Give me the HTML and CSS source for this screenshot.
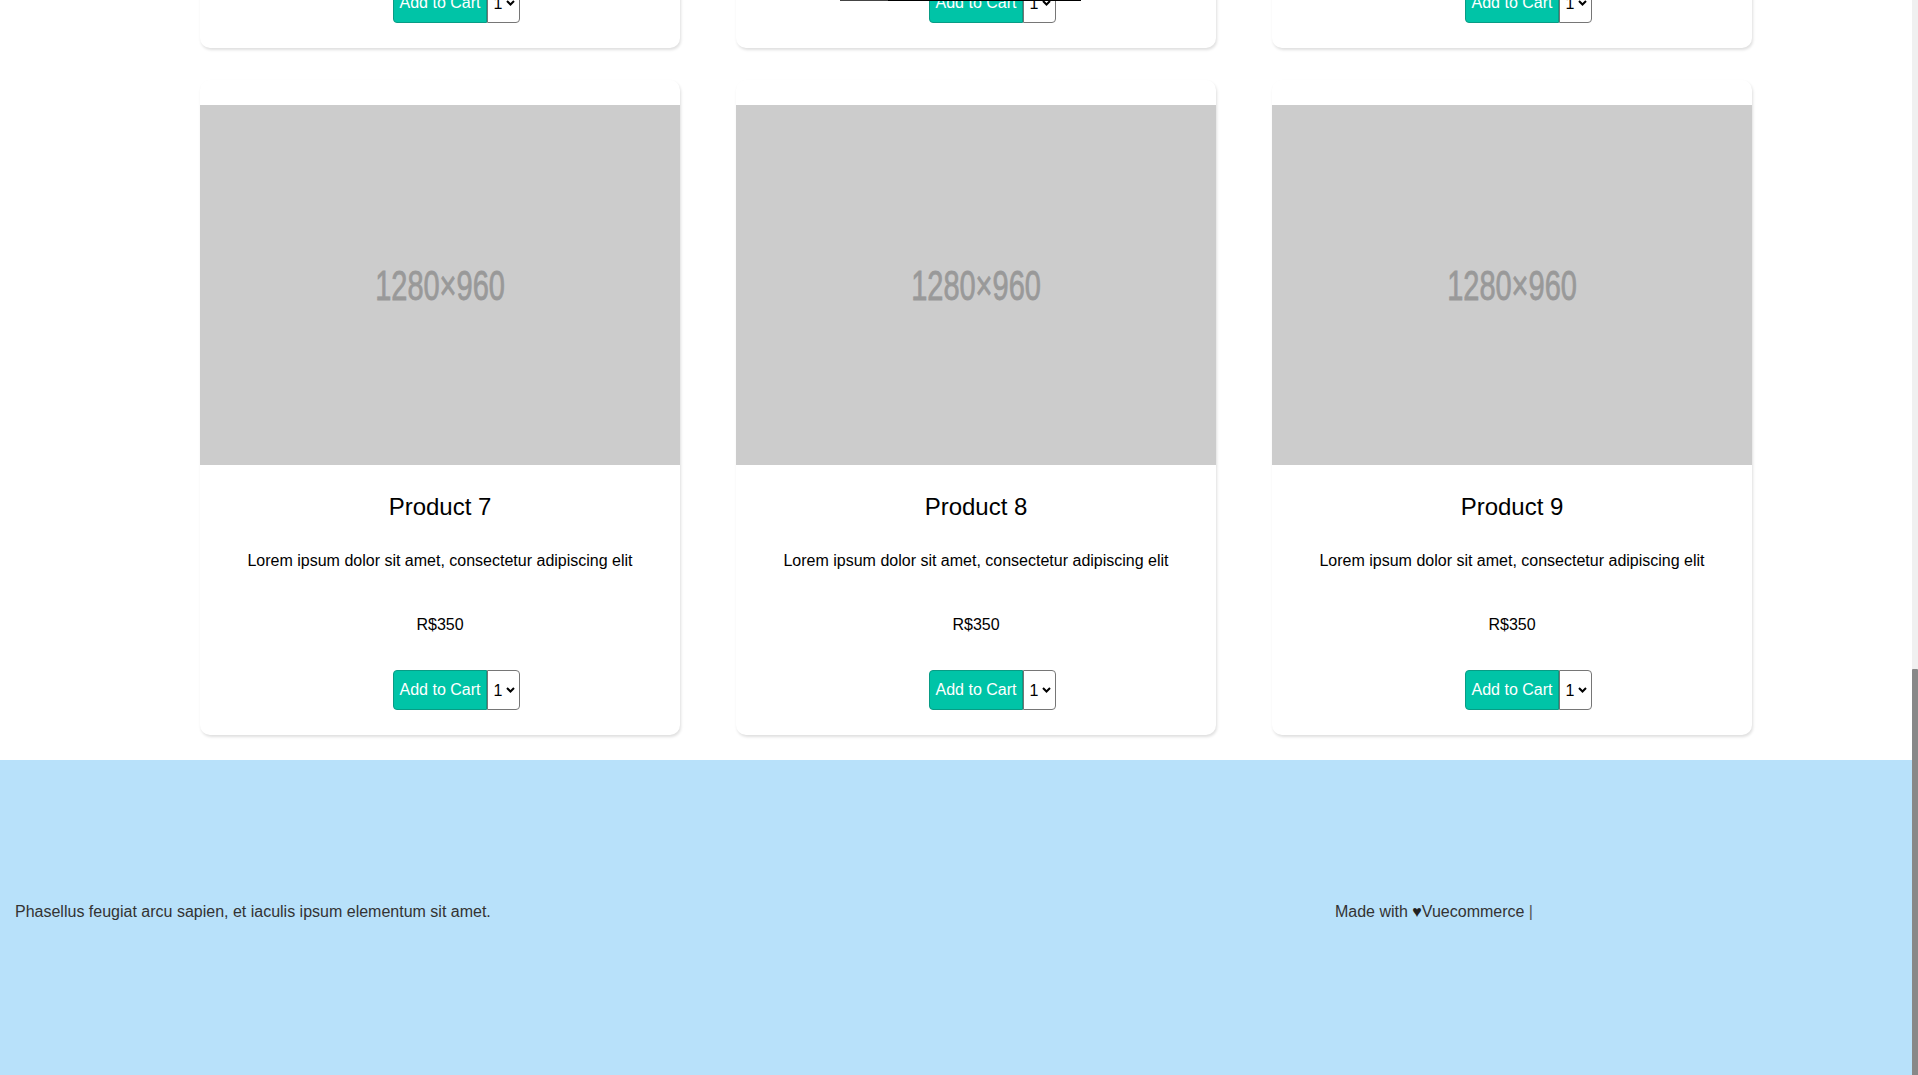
FILE: index.html
```html
<!DOCTYPE html>
<html lang="en">
<head>
<meta charset="utf-8">
<title>Vuecommerce</title>
<link rel="stylesheet" href="styles.css">
</head>
<body>
<div class="scroller">
  <div class="page">
    <header class="header">
      <nav class="navbar">
        <span class="brand">Vuecommerce</span>
        <span class="nav-links"><a href="#">Home</a><a href="#">Cart</a></span>
      </nav>
      <section class="hero">
        <h1 class="hero-title">Vuecommerce</h1>
        <p class="hero-sub">Phasellus feugiat arcu sapien, et iaculis ipsum elementum sit amet.</p>
      </section>
    </header>

    <main class="products">
      <div class="grid">
        <div class="card">
          <div class="thumb"><span class="thumb-label">1280×960</span></div>
          <h2 class="card-title">Product 1</h2>
          <p class="card-desc">Lorem ipsum dolor sit amet, consectetur adipiscing elit</p>
          <p class="card-price">R$350</p>
          <div class="cart-row">
            <button class="cart-btn">Add to Cart</button>
            <span class="qty"><select class="qty-select"><option>1</option><option>2</option><option>3</option></select><svg class="chev" width="9" height="6" viewBox="0 0 9 6"><polyline points="1,1 4.5,4.5 8,1" fill="none" stroke="#000" stroke-width="2"/></svg></span>
          </div>
        </div>
        <div class="card">
          <div class="thumb"><span class="thumb-label">1280×960</span></div>
          <h2 class="card-title">Product 2</h2>
          <p class="card-desc">Lorem ipsum dolor sit amet, consectetur adipiscing elit</p>
          <p class="card-price">R$350</p>
          <div class="cart-row">
            <button class="cart-btn">Add to Cart</button>
            <span class="qty"><select class="qty-select"><option>1</option><option>2</option><option>3</option></select><svg class="chev" width="9" height="6" viewBox="0 0 9 6"><polyline points="1,1 4.5,4.5 8,1" fill="none" stroke="#000" stroke-width="2"/></svg></span>
          </div>
        </div>
        <div class="card">
          <div class="thumb"><span class="thumb-label">1280×960</span></div>
          <h2 class="card-title">Product 3</h2>
          <p class="card-desc">Lorem ipsum dolor sit amet, consectetur adipiscing elit</p>
          <p class="card-price">R$350</p>
          <div class="cart-row">
            <button class="cart-btn">Add to Cart</button>
            <span class="qty"><select class="qty-select"><option>1</option><option>2</option><option>3</option></select><svg class="chev" width="9" height="6" viewBox="0 0 9 6"><polyline points="1,1 4.5,4.5 8,1" fill="none" stroke="#000" stroke-width="2"/></svg></span>
          </div>
        </div>
        <div class="card">
          <div class="thumb"><span class="thumb-label">1280×960</span></div>
          <h2 class="card-title">Product 4</h2>
          <p class="card-desc">Lorem ipsum dolor sit amet, consectetur adipiscing elit</p>
          <p class="card-price">R$350</p>
          <div class="cart-row">
            <button class="cart-btn">Add to Cart</button>
            <span class="qty"><select class="qty-select"><option>1</option><option>2</option><option>3</option></select><svg class="chev" width="9" height="6" viewBox="0 0 9 6"><polyline points="1,1 4.5,4.5 8,1" fill="none" stroke="#000" stroke-width="2"/></svg></span>
          </div>
        </div>
        <div class="card">
          <div class="thumb"><span class="thumb-label">1280×960</span></div>
          <h2 class="card-title">Product 5</h2>
          <p class="card-desc">Lorem ipsum dolor sit amet, consectetur adipiscing elit</p>
          <p class="card-price">R$350</p>
          <div class="cart-row">
            <button class="cart-btn">Add to Cart</button>
            <span class="qty"><select class="qty-select"><option>1</option><option>2</option><option>3</option></select><svg class="chev" width="9" height="6" viewBox="0 0 9 6"><polyline points="1,1 4.5,4.5 8,1" fill="none" stroke="#000" stroke-width="2"/></svg></span>
          </div>
          <div class="tooltip"><span class="tooltip-tip"></span>Added to your cart</div>
        </div>
        <div class="card">
          <div class="thumb"><span class="thumb-label">1280×960</span></div>
          <h2 class="card-title">Product 6</h2>
          <p class="card-desc">Lorem ipsum dolor sit amet, consectetur adipiscing elit</p>
          <p class="card-price">R$350</p>
          <div class="cart-row">
            <button class="cart-btn">Add to Cart</button>
            <span class="qty"><select class="qty-select"><option>1</option><option>2</option><option>3</option></select><svg class="chev" width="9" height="6" viewBox="0 0 9 6"><polyline points="1,1 4.5,4.5 8,1" fill="none" stroke="#000" stroke-width="2"/></svg></span>
          </div>
        </div>
        <div class="card">
          <div class="thumb"><span class="thumb-label">1280×960</span></div>
          <h2 class="card-title">Product 7</h2>
          <p class="card-desc">Lorem ipsum dolor sit amet, consectetur adipiscing elit</p>
          <p class="card-price">R$350</p>
          <div class="cart-row">
            <button class="cart-btn">Add to Cart</button>
            <span class="qty"><select class="qty-select"><option>1</option><option>2</option><option>3</option></select><svg class="chev" width="9" height="6" viewBox="0 0 9 6"><polyline points="1,1 4.5,4.5 8,1" fill="none" stroke="#000" stroke-width="2"/></svg></span>
          </div>
        </div>
        <div class="card">
          <div class="thumb"><span class="thumb-label">1280×960</span></div>
          <h2 class="card-title">Product 8</h2>
          <p class="card-desc">Lorem ipsum dolor sit amet, consectetur adipiscing elit</p>
          <p class="card-price">R$350</p>
          <div class="cart-row">
            <button class="cart-btn">Add to Cart</button>
            <span class="qty"><select class="qty-select"><option>1</option><option>2</option><option>3</option></select><svg class="chev" width="9" height="6" viewBox="0 0 9 6"><polyline points="1,1 4.5,4.5 8,1" fill="none" stroke="#000" stroke-width="2"/></svg></span>
          </div>
        </div>
        <div class="card">
          <div class="thumb"><span class="thumb-label">1280×960</span></div>
          <h2 class="card-title">Product 9</h2>
          <p class="card-desc">Lorem ipsum dolor sit amet, consectetur adipiscing elit</p>
          <p class="card-price">R$350</p>
          <div class="cart-row">
            <button class="cart-btn">Add to Cart</button>
            <span class="qty"><select class="qty-select"><option>1</option><option>2</option><option>3</option></select><svg class="chev" width="9" height="6" viewBox="0 0 9 6"><polyline points="1,1 4.5,4.5 8,1" fill="none" stroke="#000" stroke-width="2"/></svg></span>
          </div>
        </div>
      </div>
    </main>

    <footer class="footer">
      <div class="footer-col footer-left">Phasellus feugiat arcu sapien, et iaculis ipsum elementum sit amet.</div>
      <div class="footer-col footer-right">Made with <span class="heart">♥</span>Vuecommerce <span class="sep">|</span></div>
    </footer>
  </div>
</div>
<div class="scrollbar"><div class="scrollbar-thumb"></div></div>
</body>
</html>
```

FILE: styles.css
```css
html, body {
  margin: 0;
  padding: 0;
  height: 100%;
  overflow: hidden;
  background: #fff;
}

body {
  display: flex;
  font-family: "Liberation Sans", Arial, sans-serif;
  color: #111;
}

.scroller {
  flex: 1;
  min-width: 0;
  height: 100vh;
  overflow-y: auto;
  overflow-x: hidden;
  display: flex;
  flex-direction: column-reverse;
  scrollbar-width: none;
}
.scroller::-webkit-scrollbar {
  display: none;
}

/* drawn scrollbar, page scrolled to the bottom */
.scrollbar {
  width: 6px;
  flex-shrink: 0;
  height: 100vh;
  background: #f0f0f0;
  display: flex;
  flex-direction: column;
  justify-content: flex-end;
}
.scrollbar-thumb {
  height: 406px;
  background: #888;
  border-radius: 1px 1px 0 0;
}

.page {
  flex-shrink: 0;
}

/* header (scrolled out of view) */
.header {
  height: 445px;
  display: flex;
  flex-direction: column;
}
.navbar {
  height: 52px;
  display: flex;
  align-items: center;
  justify-content: space-between;
  padding: 0 24px;
  background: #00c4a7;
  color: #fff;
}
.brand {
  font-size: 20px;
  font-weight: bold;
}
.nav-links {
  display: flex;
  gap: 24px;
}
.nav-links a {
  color: #fff;
  text-decoration: none;
}
.hero {
  flex: 1;
  display: flex;
  flex-direction: column;
  justify-content: center;
  align-items: center;
  background: #f5f5f5;
}
.hero-title {
  margin: 0 0 12px;
  font-size: 40px;
  font-weight: normal;
}
.hero-sub {
  margin: 0;
  font-size: 18px;
  color: #444;
}

/* products */
.products {
  padding: 32px 0 25px 200px;
}
.grid {
  display: grid;
  grid-template-columns: repeat(3, 480px);
  column-gap: 56px;
  row-gap: 32px;
}

.card {
  position: relative;
  background: #fff;
  border-radius: 10px;
  box-shadow: 1px 2px 3px rgba(0, 0, 0, 0.13);
  padding: 25px 0;
  display: flex;
  flex-direction: column;
  text-align: center;
}

.thumb {
  height: 360px;
  background: #cccccc;
  display: flex;
  align-items: center;
  justify-content: center;
  overflow: hidden;
}
.thumb-label {
  font-family: "Liberation Sans Narrow", "Liberation Sans", Arial, sans-serif;
  font-size: 42px;
  font-weight: normal;
  color: #999999;
  -webkit-text-stroke: 0.8px #999999;
  transform: translateY(1px) scaleX(0.69);
}

.card-title {
  margin: 27px 0 0;
  font-size: 24px;
  line-height: 29px;
  font-weight: normal;
  color: #000;
}
.card-desc {
  margin: 28px 0 0;
  font-size: 16px;
  line-height: 24px;
  color: #000;
}
.card-price {
  margin: 40px 0 0;
  font-size: 16px;
  line-height: 24px;
  color: #000;
}

.cart-row {
  margin-top: 33px;
  display: grid;
  grid-template-columns: 1fr auto 1fr;
  align-items: stretch;
  height: 40px;
}
.cart-btn {
  grid-column: 2;
  box-sizing: border-box;
  height: 40px;
  padding: 0 6px;
  border: 1px solid #089c85;
  border-radius: 4px 0 0 4px;
  background: #00c4a7;
  color: #fff;
  font-family: "Liberation Sans", Arial, sans-serif;
  font-size: 16px;
  cursor: pointer;
}
.qty {
  grid-column: 3;
  justify-self: start;
  position: relative;
  display: inline-flex;
}
.qty-select {
  -webkit-appearance: none;
  appearance: none;
  box-sizing: border-box;
  width: 33px;
  height: 40px;
  margin: 0;
  padding: 0 0 0 5px;
  border: 1px solid #767676;
  border-radius: 0 4px 4px 0;
  background: #fff;
  color: #000;
  font-family: "Liberation Sans", Arial, sans-serif;
  font-size: 16px;
}
.chev {
  position: absolute;
  right: 5px;
  top: 17px;
  pointer-events: none;
}

.tooltip {
  position: absolute;
  left: 104px;
  bottom: 47px;
  width: 241px;
  height: 34px;
  box-sizing: border-box;
  background: #000;
  color: #fff;
  font-size: 14px;
  line-height: 34px;
  text-align: center;
}
.tooltip-tip {
  position: absolute;
  left: 0;
  bottom: 0;
  width: 48px;
  height: 2px;
  background: #444;
}

/* footer */
.footer {
  background: #b8e1fa;
  display: flex;
  padding: 140px 0 151px;
  font-size: 16px;
  line-height: 24px;
  color: #333;
}
.footer-col {
  flex: 1;
  padding: 0 15px;
}
.footer-left {
  text-align: left;
}
.footer-right {
  text-align: center;
}
.heart {
  color: #222;
}
.sep {
  color: #555;
}
```
